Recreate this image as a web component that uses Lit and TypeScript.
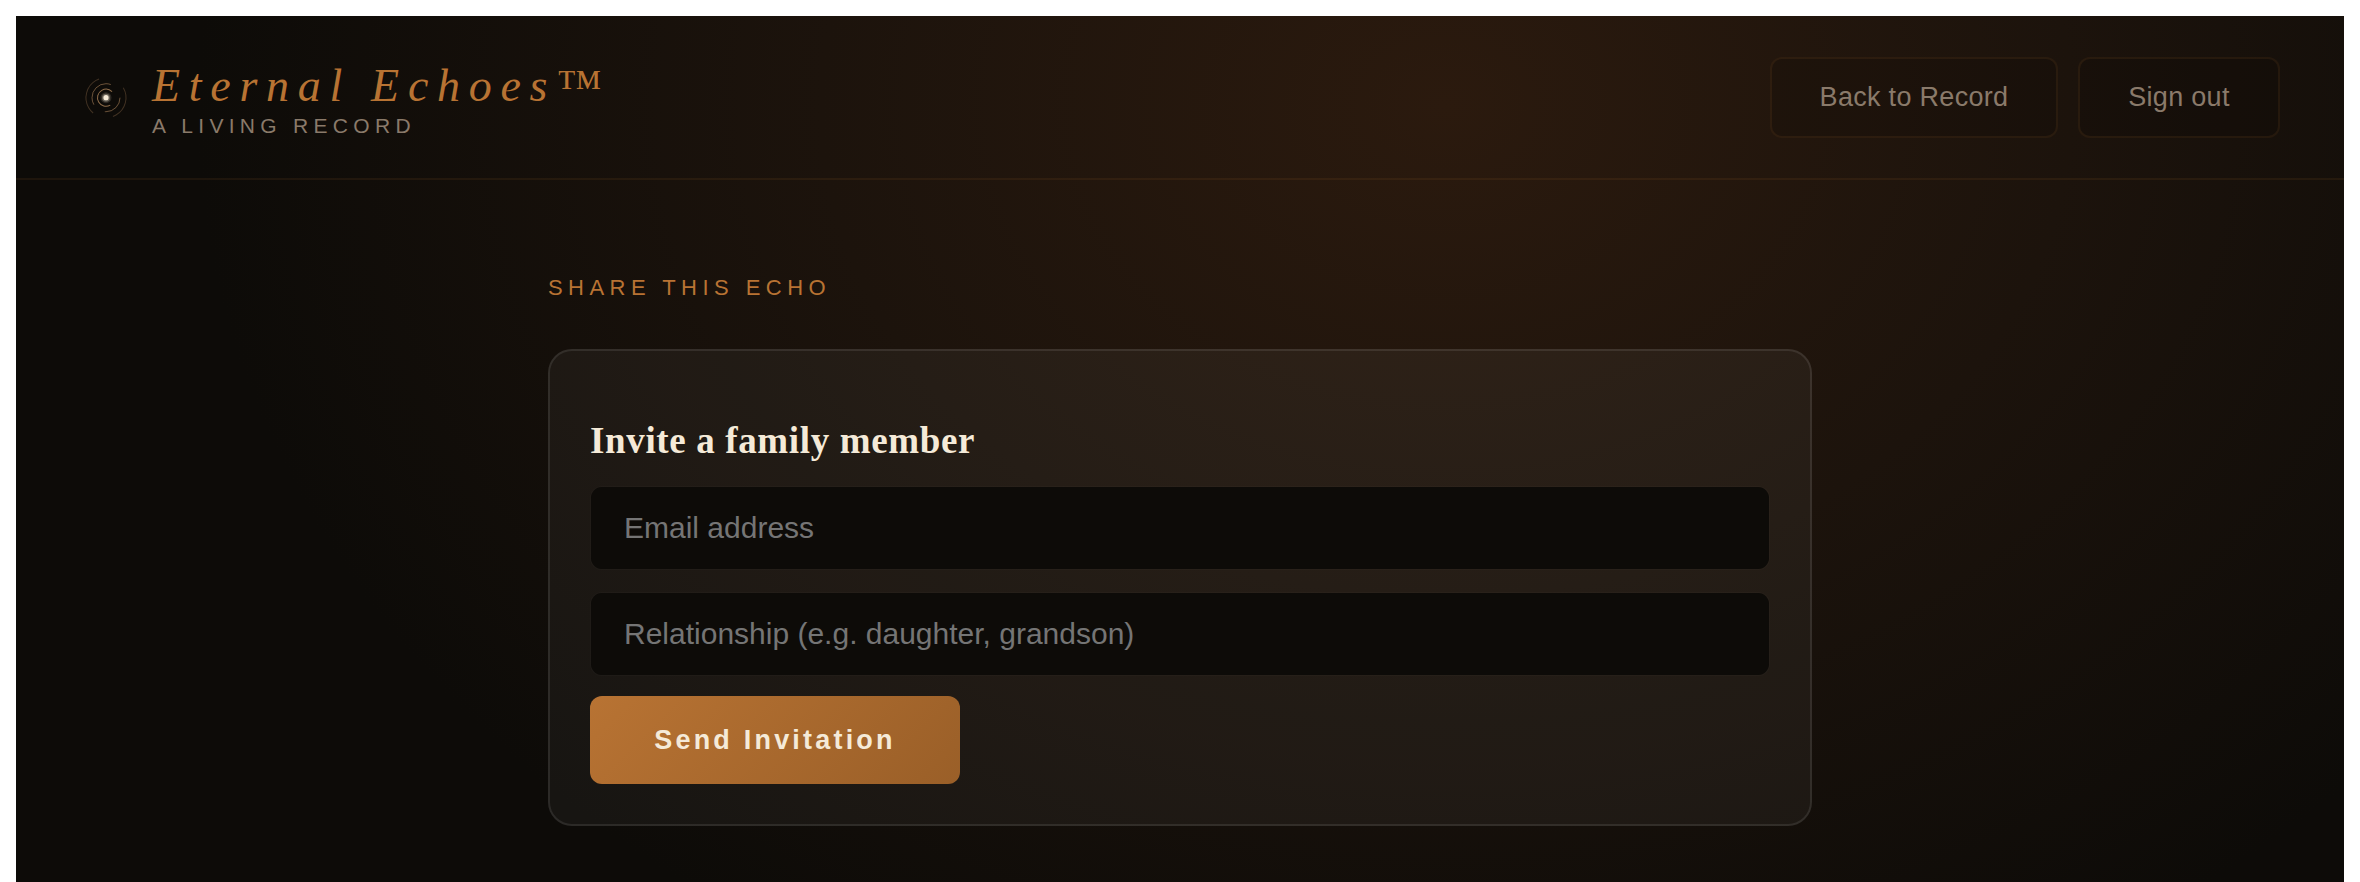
import { LitElement, html, css } from "lit";
import { customElement } from "lit/decorators.js";

@customElement("app-root")
export class AppRoot extends LitElement {
  static styles = css`
    :host {
      display: block;
      box-sizing: border-box;
      margin: 16px 16px 0;
      height: 866px;
      overflow: hidden;
      background:
        radial-gradient(ellipse 1250px 980px at 1430px 90px, #2b1a0e 0%, #1c130c 50%, #0d0b08 100%),
        #0d0b08;
      font-family: "Liberation Sans", Arial, sans-serif;
    }
    header {
      display: flex;
      align-items: center;
      justify-content: space-between;
      height: 162px;
      padding: 0 64px;
      border-bottom: 2px solid rgba(184, 115, 51, 0.1);
    }
    .brand { display: flex; align-items: center; gap: 20px; }
    .logo { width: 52px; height: 52px; display: block; }
    .brand-text { display: flex; flex-direction: column; padding-top: 2px; }
    .title {
      font-family: "Liberation Serif", Georgia, serif;
      font-style: italic;
      font-size: 46px;
      line-height: 54px;
      letter-spacing: 8.7px;
      color: #b87333;
    }
    .sub {
      font-size: 21px;
      line-height: 25px;
      letter-spacing: 5.3px;
      color: #8a7a6a;
    }
    .actions { display: flex; gap: 20px; }
    .ghost {
      box-sizing: border-box;
      height: 81px;
      border: 2px solid rgba(184, 115, 51, 0.1);
      border-radius: 12px;
      background: rgba(0, 0, 0, 0.12);
      color: #8a7a6a;
      font: 27px "Liberation Sans", Arial, sans-serif;
      letter-spacing: 0.3px;
    }
    .back { width: 288px; }
    .out { width: 202px; }
    main { width: 1264px; margin: 0 auto; padding-top: 95px; }
    .eyebrow {
      font-size: 22px;
      line-height: 26px;
      letter-spacing: 5.45px;
      color: #b87333;
      margin-bottom: 48px;
    }
    .card {
      box-sizing: border-box;
      height: 477px;
      padding: 67px 40px 0;
      border: 2px solid rgba(255, 255, 255, 0.09);
      border-radius: 24px;
      background: rgba(255, 255, 255, 0.045);
    }
    h2 {
      margin: 0 0 23px;
      padding-top: 1px;
      font-family: "Liberation Serif", Georgia, serif;
      font-weight: 700;
      font-size: 37px;
      line-height: 44px;
      letter-spacing: 0.64px;
      color: #f5ead8;
    }
    .field {
      display: block;
      box-sizing: border-box;
      width: 100%;
      height: 84px;
      margin-bottom: 22px;
      padding: 0 33px;
      border: 1px solid rgba(255, 255, 255, 0.02);
      border-radius: 12px;
      background: #0d0b08;
      background-clip: padding-box;
      color: #f5ead8;
      font: 30px "Liberation Sans", Arial, sans-serif;
      outline: none;
    }
    .field.last { margin-bottom: 20px; }
    .field::placeholder { color: #757575; opacity: 1; }
    .send {
      display: block;
      width: 370px;
      height: 88px;
      border: 0;
      border-radius: 12px;
      background: linear-gradient(135deg, #b87333, #9a5f28);
      color: #f5ead8;
      font: 700 27px "Liberation Sans", Arial, sans-serif;
      letter-spacing: 3.2px;
    }
  `;

  render() {
    return html`
      <header>
        <div class="brand">
          <svg class="logo" viewBox="0 0 52 52" fill="none" stroke="#c89868" stroke-width="1">
            <circle cx="26" cy="26.7" r="20" pathLength="360" opacity="0.28" stroke-dasharray="100 60 120 80" transform="rotate(-30 26 26.7)"></circle>
            <circle cx="26" cy="26.7" r="14" pathLength="360" opacity="0.5" stroke-dasharray="95 55 140 70"></circle>
            <circle cx="26" cy="26.7" r="8.5" pathLength="360" opacity="0.7" stroke-dasharray="255 105" transform="rotate(60 26 26.7)"></circle>
            <circle cx="26" cy="26.7" r="5.5" fill="#f5ead8" stroke="none" opacity="0.14"></circle>
            <circle cx="26" cy="26.7" r="4" fill="#f5ead8" stroke="none" opacity="0.3"></circle>
            <circle cx="26" cy="26.7" r="2.6" fill="#f5ead8" stroke="none"></circle>
          </svg>
          <div class="brand-text">
            <div class="title">Eternal Echoes™</div>
            <div class="sub">A LIVING RECORD</div>
          </div>
        </div>
        <div class="actions">
          <button class="ghost back">Back to Record</button>
          <button class="ghost out">Sign out</button>
        </div>
      </header>
      <main>
        <div class="eyebrow">SHARE THIS ECHO</div>
        <section class="card">
          <h2>Invite a family member</h2>
          <input class="field" placeholder="Email address" />
          <input class="field last" placeholder="Relationship (e.g. daughter, grandson)" />
          <button class="send">Send Invitation</button>
        </section>
      </main>
    `;
  }
}
